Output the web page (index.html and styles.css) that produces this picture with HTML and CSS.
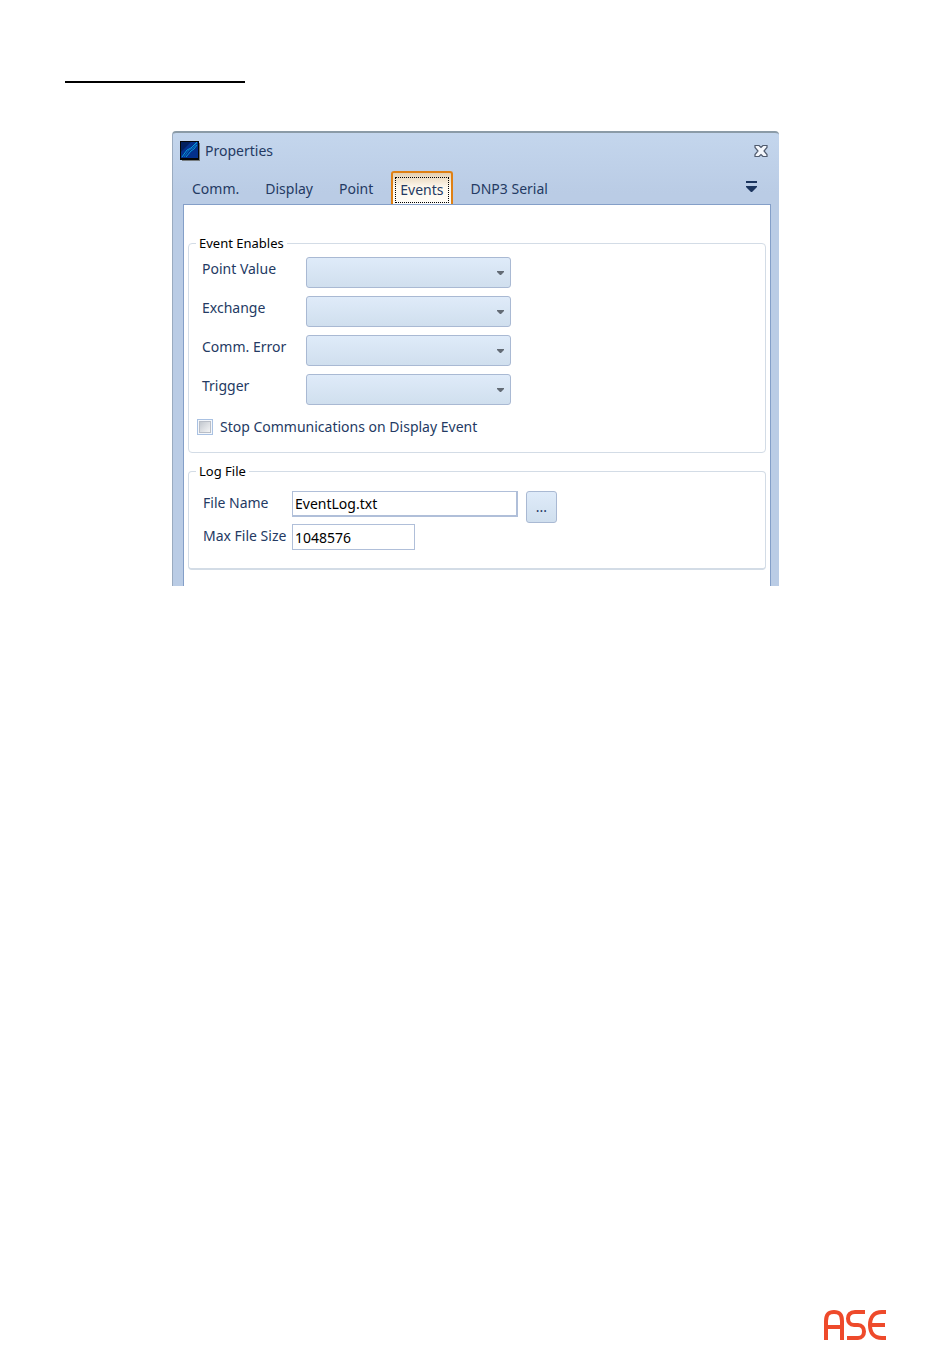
FILE: index.html
```html
<!DOCTYPE html>
<html lang="en">
<head>
<meta charset="utf-8">
<meta name="viewport" content="width=device-width, initial-scale=1">
<title>Properties - Events</title>
<link rel="stylesheet" href="styles.css">
</head>
<body>
<hr class="rule">
<main class="dialog">
  <header class="titlebar">
    <svg class="app-icon" width="20" height="20" viewBox="0 0 20 20" aria-hidden="true">
      <path d="M2 2h18v18H2z" fill="#777d80"/>
      <path d="M0 0h19v19H0z" fill="#050608"/>
      <path d="M1 1h17v16H1z" fill="#04308c"/>
      <path d="M1 1h10L1 11z" fill="#02205f"/>
      <path d="M2 16L7 9l4-2 6-6M6 16l5-6 3-2 3-4" fill="none" stroke="#0a9ad8" stroke-width="1"/>
      <path d="M4 16l5-7 4-2 4-5" fill="none" stroke="#0870c0" stroke-width="1"/>
    </svg>
    <h1 class="title">Properties</h1>
    <button class="icon-button" type="button" aria-label="Close">
      <svg width="14" height="12" viewBox="0 0 14 12" aria-hidden="true">
        <path d="M1 .5h4l2 2 2-2h4v2L10 6l3 3.500v2H9l-2-2-2 2H1v-2L4 6 1 2.500z" fill="#f4f7fc" stroke="#505b6e" stroke-width="1.200"/>
      </svg>
    </button>
  </header>
  <nav class="tabs" role="tablist">
    <button class="tab" type="button" role="tab">Comm.</button>
    <button class="tab" type="button" role="tab">Display</button>
    <button class="tab" type="button" role="tab">Point</button>
    <button class="tab tab-active" type="button" role="tab" aria-selected="true"><span class="tab-focus">Events</span></button>
    <button class="tab" type="button" role="tab">DNP3 Serial</button>
    <button class="icon-button tab-menu" type="button" aria-label="More tabs">
      <svg width="11" height="11" viewBox="0 0 11 11" aria-hidden="true">
        <path d="M0 0h11v2H0zM0 5h11v1L6 11H5L0 6z" fill="#1c355e"/>
      </svg>
    </button>
  </nav>
  <div class="panel">
    <fieldset class="group">
      <legend class="legend">Event Enables</legend>
      <div class="events">
        <label class="label" for="point">Point Value</label>
        <div class="dropdown"><select class="select" id="point"><option></option></select><svg class="arrow" width="7" height="4" viewBox="0 0 7 4" aria-hidden="true"><path d="M0 0h7v1L4 4H3L0 1z" fill="#636b75"/></svg></div>
        <label class="label" for="exchange">Exchange</label>
        <div class="dropdown"><select class="select" id="exchange"><option></option></select><svg class="arrow" width="7" height="4" viewBox="0 0 7 4" aria-hidden="true"><path d="M0 0h7v1L4 4H3L0 1z" fill="#636b75"/></svg></div>
        <label class="label" for="error">Comm. Error</label>
        <div class="dropdown"><select class="select" id="error"><option></option></select><svg class="arrow" width="7" height="4" viewBox="0 0 7 4" aria-hidden="true"><path d="M0 0h7v1L4 4H3L0 1z" fill="#636b75"/></svg></div>
        <label class="label" for="trigger">Trigger</label>
        <div class="dropdown"><select class="select" id="trigger"><option></option></select><svg class="arrow" width="7" height="4" viewBox="0 0 7 4" aria-hidden="true"><path d="M0 0h7v1L4 4H3L0 1z" fill="#636b75"/></svg></div>
      </div>
      <div class="check-row">
        <input class="check" type="checkbox" id="stop">
        <label class="label" for="stop">Stop Communications on Display Event</label>
      </div>
    </fieldset>
    <fieldset class="group group-last">
      <legend class="legend">Log File</legend>
      <div class="log">
        <label class="label" for="file">File Name</label>
        <div class="file-row">
          <input class="text text-file" type="text" id="file" value="EventLog.txt">
          <button class="browse" type="button" aria-label="Browse">...</button>
        </div>
        <label class="label" for="size">Max File Size</label>
        <input class="text text-size" type="text" id="size" value="1048576">
      </div>
    </fieldset>
  </div>
</main>
<footer class="footer">
  <svg width="64" height="32" viewBox="-1 0 64 32" role="img" aria-label="ASE">
    <g fill="none" stroke="#ee4a2b" stroke-width="4">
      <path d="M2 31V12C2 5 5 3 10 3S18 5 18 12V31M2 18H18"/>
      <path d="M41 3H31C26 3 24 6 24 9.500S26 16 30 16H34C38 16 40 19 40 22.500S38 29 34 29H23"/>
      <path d="M62 3H58C50 3 46 8 46 16S50 29 58 29H62M46 16H61"/>
    </g>
  </svg>
</footer>
</body>
</html>
```
FILE: styles.css
```css
* {
  box-sizing: border-box;
}

body {
  display: flex;
  flex-direction: column;
  min-height: 100vh;
  margin: 0;
  padding: 81px 63px 12px 64px;
  background: #fff;
  color: #243a63;
  font: 14px/20px "Noto Sans", "Open Sans", sans-serif;
}

button,
input,
select {
  margin: 0;
  color: inherit;
  font: inherit;
}

.rule {
  width: 180px;
  height: 2px;
  margin: 0 0 0 1px;
  border: 0;
  background: #000;
}

.dialog {
  width: 100%;
  max-width: 607px;
  margin: 48px auto 0;
  padding: 0 8px 0 10px;
  border-top: 2px solid #8b9ba7;
  border-left: 1px solid #9aabc0;
  border-radius: 4px 4px 0 0;
  background: linear-gradient(#c4d6ed, #bacce5 60px);
}

.titlebar {
  display: flex;
  align-items: center;
  height: 38px;
  padding: 0 3px 2px 0;
}

.app-icon {
  margin: 0 5px 0 -3px;
}

.title {
  flex: 1;
  margin: 0;
  font-size: 14px;
  font-weight: 400;
}

.icon-button {
  display: flex;
  padding: 0;
  border: 0;
  background: none;
}

.tabs {
  display: flex;
  gap: 10px;
  height: 33px;
  padding: 0 14px 0 1px;
}

.tab {
  padding: 3px 8px 0;
  border: 0;
  background: none;
}

.tab-active {
  padding: 2px 2px 0;
  border: 2px solid #df8014;
  border-bottom: 0;
  border-radius: 3px 3px 0 0;
  background: linear-gradient(#e4cfb0, #fdf7ec 14px, #fffdf8);
}

.tab-focus {
  display: block;
  padding: 2px 4px;
  border: 1px dotted #000;
}

.tab-menu {
  margin: 10px 0 0 auto;
}

.panel {
  display: grid;
  gap: 10px;
  padding: 30px 4px 16px;
  border: 1px solid #849fc8;
  border-bottom: 0;
  background: #fff;
}

.group {
  min-width: 0;
  margin: 0;
  padding: 0 8px;
  border: 1px solid #d3dce6;
  border-radius: 4px;
}

.group-last {
  border-bottom-width: 2px;
}

.legend {
  padding: 0 3px;
  margin-left: -1px;
  color: #000;
  font-size: 13px;
  line-height: 16px;
}

.events {
  display: grid;
  grid-template-columns: 104px minmax(0, 205px);
  gap: 8px 0;
  padding: 6px 0 0 5px;
}

.dropdown {
  position: relative;
  height: 31px;
}

.label {
  line-height: 24px;
  white-space: nowrap;
}

.select,
.browse {
  border: 1px solid #a9b9d3;
  border-radius: 3px;
  background: linear-gradient(#dfebf9, #d0dfee);
}

.select {
  width: 100%;
  height: 31px;
  appearance: none;
}

.arrow {
  position: absolute;
  top: 14px;
  right: 7px;
}

.check-row {
  display: flex;
  align-items: center;
  gap: 7px;
  padding: 10px 0 13px;
}

.check {
  width: 16px;
  height: 16px;
  border: 1px solid #a9c1e2;
  background: linear-gradient(135deg, #c3c8cf, #f4f5f6) center / 10px 10px no-repeat, #f1f4f8;
  box-shadow: inset 0 0 0 1px #f4f7fb, inset 0 0 0 2px #b9bec7;
  appearance: none;
}

.log {
  display: grid;
  grid-template-columns: 89px minmax(0, 1fr);
  padding: 12px 0 18px 6px;
}

.file-row {
  display: flex;
  gap: 8px;
  height: 33px;
}

.text {
  height: 26px;
  padding: 0 2px;
  border: 1px solid #b0bfd9;
  background: #fff;
  color: #000;
}

.text-file {
  width: 226px;
  border-width: 1px 2px 2px 1px;
}

.text-size {
  width: 123px;
}

.browse {
  width: 31px;
  height: 32px;
  padding: 0;
}

.footer {
  display: flex;
  justify-content: flex-end;
  margin-top: auto;
}
```
